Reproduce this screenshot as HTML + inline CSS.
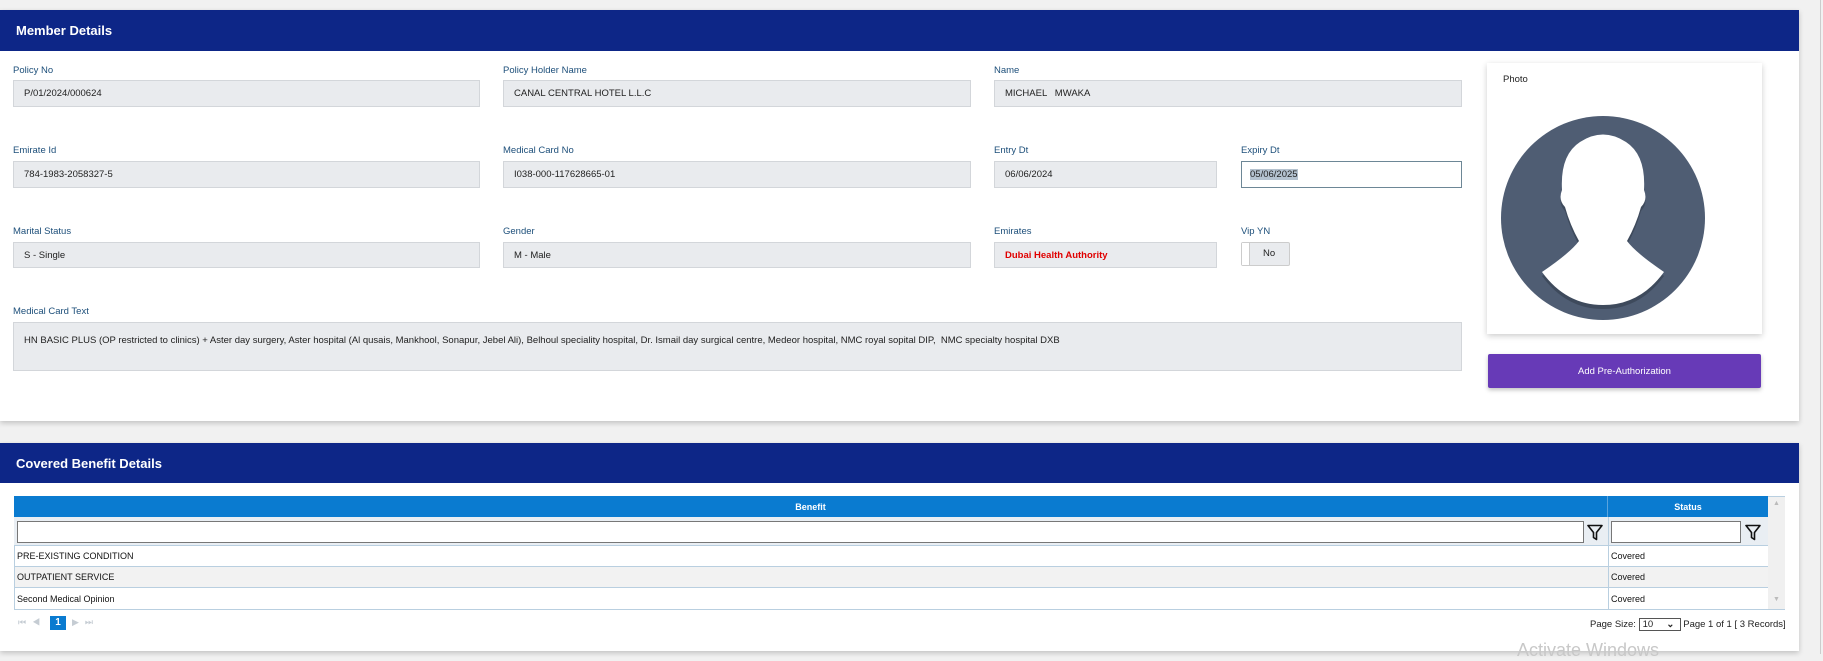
<!DOCTYPE html>
<html><head><meta charset="utf-8"><style>
*{box-sizing:border-box;margin:0;padding:0}
body{width:1823px;height:654px;background:#f1f1f1;font-family:"Liberation Sans",sans-serif;position:relative;overflow:hidden}
.abs{position:absolute}
.hdr{background:#0d2687;color:#fff;font-size:13px;font-weight:bold;padding-left:16px;display:flex;align-items:center}
.card{background:#fff;box-shadow:0 2px 5px rgba(0,0,0,.2)}
.lbl{font-size:9.5px;color:#1d4f7a}
.inp{background:#e9ebee;border:1px solid #d3d6da;font-size:9.5px;color:#222;padding-left:10px;display:flex;align-items:center}
.cell{font-size:9px;color:#111;display:flex;align-items:center;padding-left:2px}
</style></head><body>
<div class="abs card" style="left:0;top:10px;width:1799px;height:411px"></div>
<div class="abs hdr" style="left:0;top:10px;width:1799px;height:41px">Member Details</div>

<div class="abs lbl" style="left:13px;top:65px">Policy No</div>
<div class="abs inp" style="left:13px;top:80px;width:467px;height:27px">P/01/2024/000624</div>
<div class="abs lbl" style="left:503px;top:65px">Policy Holder Name</div>
<div class="abs inp" style="left:503px;top:80px;width:468px;height:27px">CANAL CENTRAL HOTEL L.L.C</div>
<div class="abs lbl" style="left:994px;top:65px">Name</div>
<div class="abs inp" style="left:994px;top:80px;width:468px;height:27px;white-space:pre">MICHAEL   MWAKA</div>

<div class="abs lbl" style="left:13px;top:145px">Emirate Id</div>
<div class="abs inp" style="left:13px;top:161px;width:467px;height:27px">784-1983-2058327-5</div>
<div class="abs lbl" style="left:503px;top:145px">Medical Card No</div>
<div class="abs inp" style="left:503px;top:161px;width:468px;height:27px">I038-000-117628665-01</div>
<div class="abs lbl" style="left:994px;top:145px">Entry Dt</div>
<div class="abs inp" style="left:994px;top:161px;width:223px;height:27px">06/06/2024</div>
<div class="abs lbl" style="left:1241px;top:145px">Expiry Dt</div>
<div class="abs inp" style="left:1241px;top:161px;width:221px;height:27px;background:#fff;border-color:#6d8796"><span style="background:#b4c2cf;margin-left:-2px">05/06/2025</span></div>

<div class="abs lbl" style="left:13px;top:226px">Marital Status</div>
<div class="abs inp" style="left:13px;top:242px;width:467px;height:26px">S - Single</div>
<div class="abs lbl" style="left:503px;top:226px">Gender</div>
<div class="abs inp" style="left:503px;top:242px;width:468px;height:26px">M - Male</div>
<div class="abs lbl" style="left:994px;top:226px">Emirates</div>
<div class="abs inp" style="left:994px;top:242px;width:223px;height:26px;color:#e00000;font-weight:bold">Dubai Health Authority</div>
<div class="abs lbl" style="left:1241px;top:226px">Vip YN</div>
<div class="abs" style="left:1241px;top:242px;width:49px;height:24px;background:#e9ebee;border:1px solid #ccc;border-radius:2px;font-size:9.5px;color:#222">
<div class="abs" style="left:0;top:0;width:8px;height:22px;background:#fff;border-right:1px solid #ccc"></div>
<div class="abs" style="left:21px;top:5px">No</div></div>

<div class="abs lbl" style="left:13px;top:306px">Medical Card Text</div>
<div class="abs inp" style="left:13px;top:322px;width:1449px;height:49px;align-items:flex-start;padding-top:12px">HN BASIC PLUS (OP restricted to clinics) + Aster day surgery, Aster hospital (Al qusais, Mankhool, Sonapur, Jebel Ali), Belhoul speciality hospital, Dr. Ismail day surgical centre, Medeor hospital, NMC royal sopital DIP,&nbsp; NMC specialty hospital DXB</div>

<div class="abs" style="left:1487px;top:63px;width:275px;height:271px;background:#fff;box-shadow:0 2px 6px rgba(0,0,0,.2)"></div>
<div class="abs" style="left:1503px;top:74px;font-size:9.5px;color:#222">Photo</div>
<svg class="abs" style="left:1500px;top:115px" width="206" height="206" viewBox="0 0 206 206">
<circle cx="103" cy="103" r="102" fill="#4f5d73"/>
<path d="M42 157 Q70 138 79 126 Q70 110 65 92 Q58 85 62 75 Q60 40 80 27 Q103 12 126 27 Q146 40 144 75 Q148 85 141 92 Q136 110 127 126 Q136 138 164 157 Q140 190 103 190 Q66 190 42 157Z" fill="#3e4a5c" transform="translate(0,4)"/>
<path d="M42 157 Q70 138 79 126 Q70 110 65 92 Q58 85 62 75 Q60 40 80 27 Q103 12 126 27 Q146 40 144 75 Q148 85 141 92 Q136 110 127 126 Q136 138 164 157 Q140 190 103 190 Q66 190 42 157Z" fill="#fff"/>
</svg>
<div class="abs" style="left:1488px;top:354px;width:273px;height:34px;background:#673ab7;color:#fff;font-size:9.5px;display:flex;align-items:center;justify-content:center;border-radius:2px;box-shadow:0 2px 4px rgba(0,0,0,.25)">Add Pre-Authorization</div>

<div class="abs card" style="left:0;top:443px;width:1799px;height:208px"></div>
<div class="abs hdr" style="left:0;top:443px;width:1799px;height:40px">Covered Benefit Details</div>

<div class="abs" style="left:14px;top:496px;width:1771px;height:114px;border:1px solid #b9cfe0"></div>
<div class="abs" style="left:14px;top:496px;width:1754px;height:21px;background:#0a7bd0;color:#fff;font-size:9px;font-weight:bold">
<div class="abs" style="left:0;top:0;width:1594px;height:21px;display:flex;align-items:center;justify-content:center;border-right:1px solid #5aa4de">Benefit</div>
<div class="abs" style="left:1594px;top:0;width:160px;height:21px;display:flex;align-items:center;justify-content:center">Status</div></div>
<div class="abs" style="left:1768px;top:497px;width:17px;height:112px;background:#f0f0f0"></div>
<div class="abs" style="left:1773px;top:500px;font-size:7px;color:#bbb">▲</div>
<div class="abs" style="left:1773px;top:596px;font-size:7px;color:#bbb">▼</div>
<div class="abs" style="left:14px;top:517px;width:1754px;height:29px;background:#e9eef3;border-bottom:1px solid #b9cfe0"></div>
<div class="abs" style="left:17px;top:521px;width:1567px;height:22px;background:#fff;border:1px solid #777"></div>
<svg class="abs" style="left:1587px;top:524px" width="16" height="17" viewBox="0 0 16 17"><path d="M1 1.5H15L9.5 8.5V15.5L6.5 13.5V8.5Z" fill="none" stroke="#111" stroke-width="1.6" stroke-linejoin="round"/></svg>
<div class="abs" style="left:1611px;top:521px;width:130px;height:22px;background:#fff;border:1px solid #777"></div>
<svg class="abs" style="left:1745px;top:524px" width="16" height="17" viewBox="0 0 16 17"><path d="M1 1.5H15L9.5 8.5V15.5L6.5 13.5V8.5Z" fill="none" stroke="#111" stroke-width="1.6" stroke-linejoin="round"/></svg>
<div class="abs" style="left:1608px;top:517px;width:1px;height:92px;background:#b9cfe0"></div>

<div class="abs cell" style="left:15px;top:546px;width:1593px;height:21px;border-bottom:1px solid #b9cfe0">PRE-EXISTING CONDITION</div>
<div class="abs cell" style="left:1609px;top:546px;width:159px;height:21px;border-bottom:1px solid #b9cfe0">Covered</div>
<div class="abs cell" style="left:15px;top:567px;width:1593px;height:21px;border-bottom:1px solid #b9cfe0;background:#f2f2f2">OUTPATIENT SERVICE</div>
<div class="abs cell" style="left:1609px;top:567px;width:159px;height:21px;border-bottom:1px solid #b9cfe0;background:#f2f2f2">Covered</div>
<div class="abs cell" style="left:15px;top:588px;width:1593px;height:21px">Second Medical Opinion</div>
<div class="abs cell" style="left:1609px;top:588px;width:159px;height:21px">Covered</div>

<div class="abs" style="left:18px;top:617px;font-size:9px;color:#c5ccd3;letter-spacing:6px">⏮◀</div>
<div class="abs" style="left:50px;top:616px;width:16px;height:14px;background:#0a7bd0;color:#fff;font-size:10px;font-weight:bold;text-align:center;line-height:14px">1</div>
<div class="abs" style="left:72px;top:617px;font-size:9px;color:#c5ccd3;letter-spacing:6px">▶⏭</div>
<div class="abs" style="left:1590px;top:618px;font-size:9.5px;color:#222;white-space:nowrap">Page Size: <span style="display:inline-block;width:42px;height:13px;border:1px solid #555;vertical-align:middle;padding-left:3px;line-height:11px">10 &nbsp;&nbsp;&nbsp;&nbsp;<b>⌄</b></span> Page 1 of 1 [ 3 Records]</div>
<div class="abs" style="left:1517px;top:640px;font-size:18px;color:#c8c8c8">Activate Windows</div>
<div class="abs" style="left:1820px;top:0;width:1px;height:654px;background:#ccc"></div>
</body></html>
